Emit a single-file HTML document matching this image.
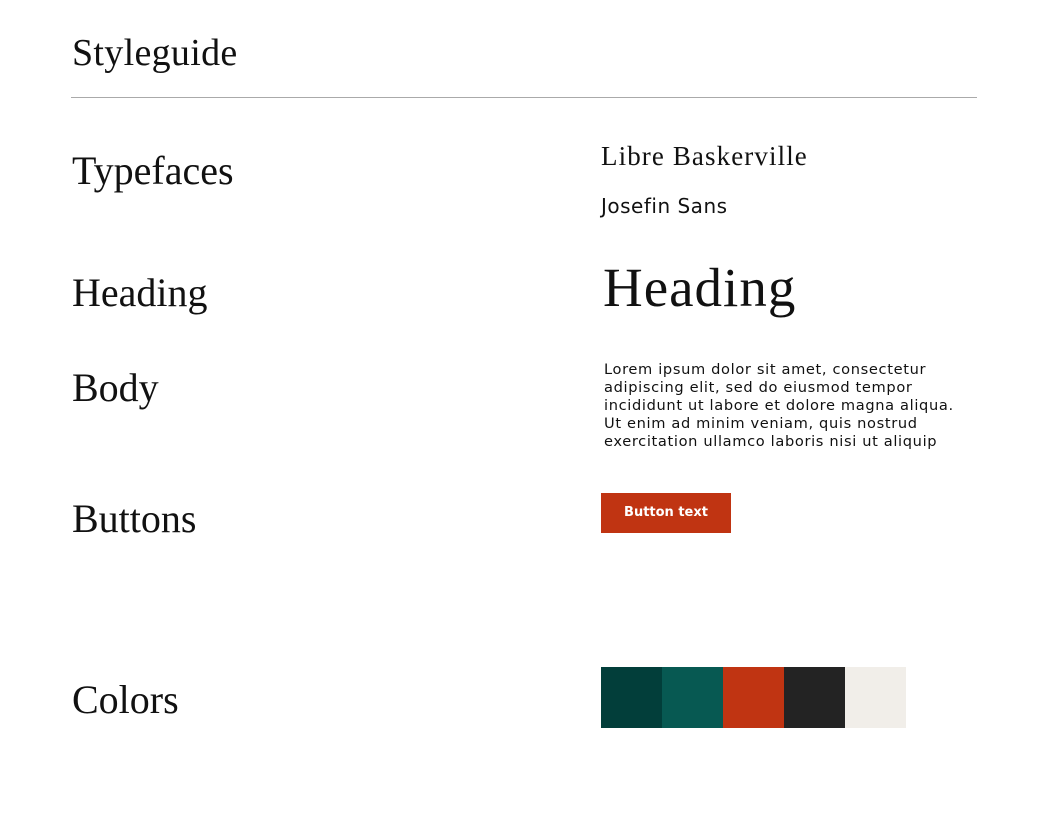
<!DOCTYPE html>
<html><head><style>
body{margin:0;width:1055px;height:831px;background:#fff;position:relative;font-family:"Liberation Serif",serif;color:#111}
.a{position:absolute;white-space:nowrap}
.h{font-size:40px;line-height:1}
.s{font-family:"DejaVu Sans","Liberation Sans",sans-serif}
</style></head><body>
<div class="a" style="left:72px;top:34px;font-size:38px;line-height:1;letter-spacing:0.3px">Styleguide</div>
<div class="a" style="left:71px;top:97px;width:906px;height:1px;background:#aaa"></div>
<div class="a h" style="left:72px;top:151px">Typefaces</div>
<div class="a" style="left:601px;top:143px;font-size:27px;line-height:1;letter-spacing:1.1px">Libre Baskerville</div>
<div class="a s" style="left:601px;top:196px;font-size:20px;line-height:1;letter-spacing:0.5px">Josefin Sans</div>
<div class="a h" style="left:72px;top:273px">Heading</div>
<div class="a" style="left:603px;top:260px;font-size:55px;line-height:1;letter-spacing:1px">Heading</div>
<div class="a h" style="left:72px;top:368px">Body</div>
<div class="a s" style="left:604px;top:361px;font-size:14.6px;line-height:18px;letter-spacing:0.65px">Lorem ipsum dolor sit amet, consectetur<br>adipiscing elit, sed do eiusmod tempor<br>incididunt ut labore et dolore magna aliqua.<br>Ut enim ad minim veniam, quis nostrud<br>exercitation ullamco laboris nisi ut aliquip</div>
<div class="a h" style="left:72px;top:499px">Buttons</div>
<div class="a s" style="left:601px;top:493px;width:130px;height:40px;background:#c03412;color:#fff;font-size:13px;font-weight:bold;line-height:40px;text-align:center">Button text</div>
<div class="a h" style="left:72px;top:680px">Colors</div>
<div class="a" style="left:601px;top:667px;width:61px;height:61px;background:#023e3a"></div>
<div class="a" style="left:662px;top:667px;width:61px;height:61px;background:#075952"></div>
<div class="a" style="left:723px;top:667px;width:61px;height:61px;background:#c03412"></div>
<div class="a" style="left:784px;top:667px;width:61px;height:61px;background:#232323"></div>
<div class="a" style="left:845px;top:667px;width:61px;height:61px;background:#f1eee9"></div>
</body></html>
